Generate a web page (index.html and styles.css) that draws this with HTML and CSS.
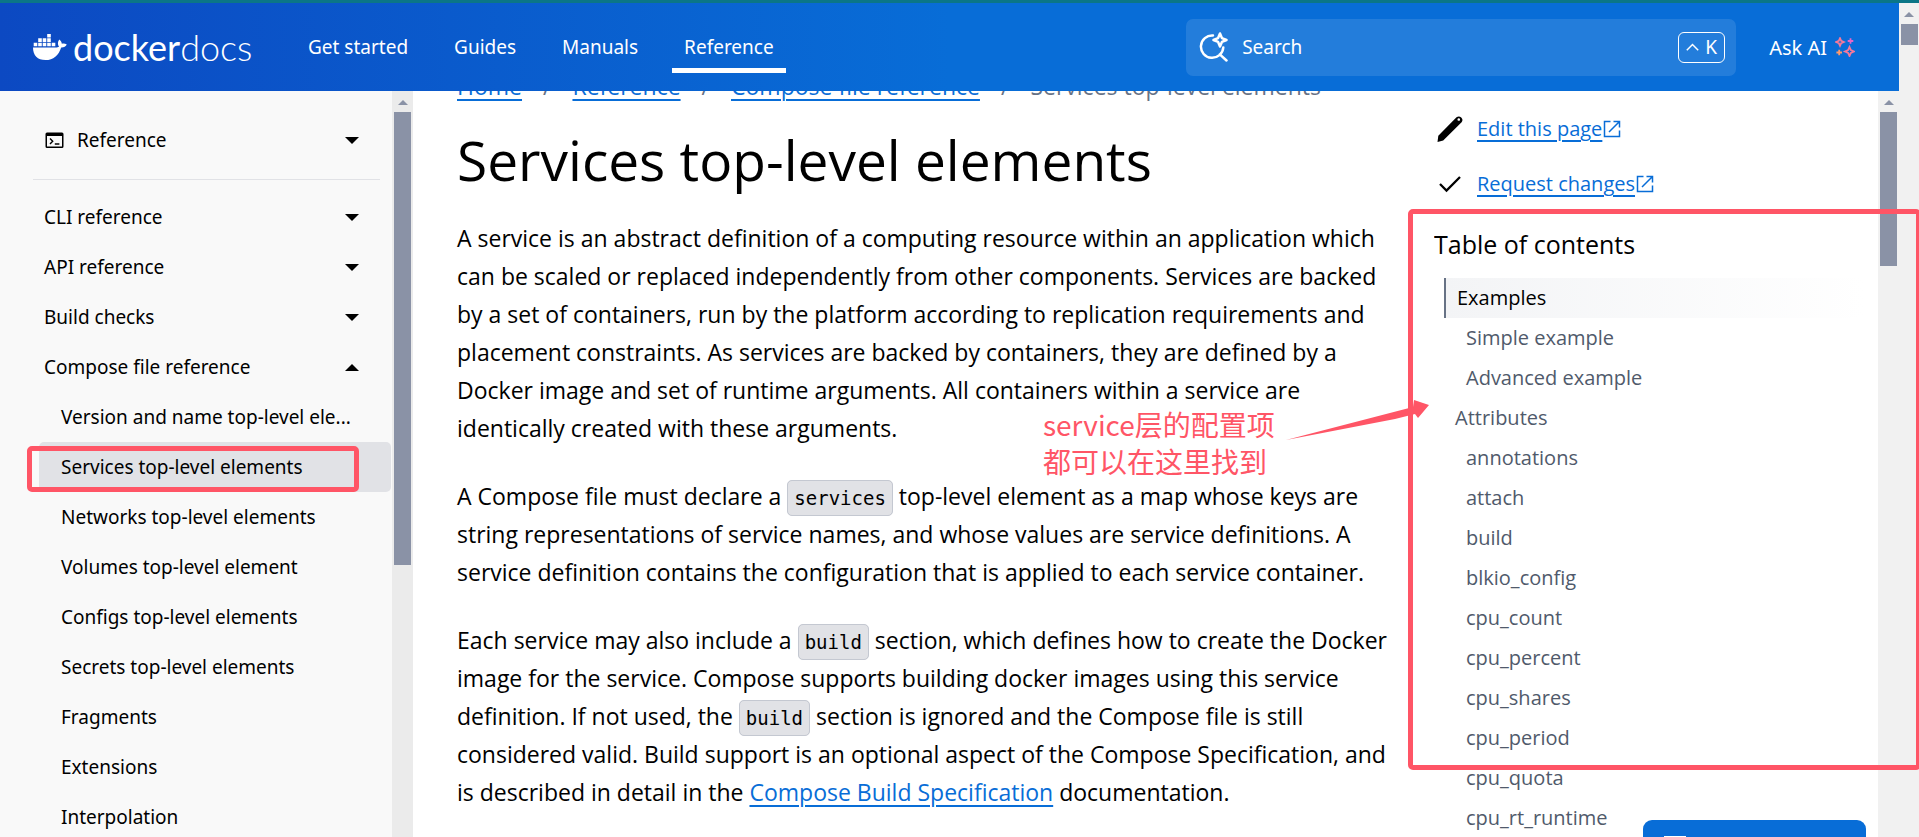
FILE: index.html
```html
<!DOCTYPE html>
<html lang="en">
<head>
<meta charset="utf-8">
<title>Services top-level elements | Docker Docs</title>
<link rel="stylesheet" href="styles.css">
</head>
<body>
<div class="window">
  <div class="site">
    <header class="header">
      <a class="logo" href="#">
        <svg class="logo-whale" width="34" height="28" viewBox="0 0 34 28" fill="#fff" aria-hidden="true">
          <path d="M14.200 1h3.600v3.600h-3.600zM5.200 5.300h3.600v3.600H5.200zM9.700 5.300h3.600v3.600H9.700zM14.200 5.300h3.600v3.600h-3.600zM.7 9.700h3.600v3.600H.7zM5.200 9.700h3.600v3.600H5.200zM9.700 9.700h3.600v3.600H9.700zM14.200 9.700h3.600v3.600h-3.600zM18.700 9.700h3.600v3.600h-3.600z"/>
          <path d="M0 14.500h22.500c1.500 0 2.900-.4 3.500-.8-1.500-2-1.500-5 .3-7.200 1.600 1.200 2.300 2.500 2.500 4.200 1.800-.4 3.400-.2 5 .7-1 2.200-3 3.100-5.600 3C25.500 22.500 20.500 27 12.500 27 4.500 27 0 22.500 0 14.500z"/>
        </svg>
        <span class="logo-text">docker<span class="logo-light">docs</span></span>
      </a>
      <nav class="nav">
        <a href="#">Get started</a>
        <a href="#">Guides</a>
        <a href="#">Manuals</a>
        <a class="current" href="#">Reference</a>
      </nav>
      <button class="search" type="button">
        <svg width="30" height="30" viewBox="0 0 30 30" fill="none" stroke="#fff" stroke-width="2.500" stroke-linecap="round" stroke-linejoin="round" aria-hidden="true">
          <path d="M14 3.500A11.200 11.200 0 1 0 24.300 15.500M20.800 22.300l6.700 6.200"/>
          <path d="M21 1.500l1.900 4.600 4.600 1.900-4.600 1.900L21 14.500l-1.900-4.600L14.500 8l4.600-1.900z"/>
        </svg>
        <span class="search-label">Search</span>
        <kbd class="keys">
          <svg width="13" height="8" viewBox="0 0 13 8" fill="none" stroke="#fff" stroke-width="1.500" aria-hidden="true"><path d="M.8 7.200l5.700-5.700 5.700 5.700"/></svg>
          K
        </kbd>
      </button>
      <button class="ask" type="button">Ask AI
        <svg width="20" height="20" viewBox="0 0 20 20" fill="none" stroke-width="1.800" aria-hidden="true">
          <path stroke="#f5799a" d="M5 1.200l1.200 2.600L8.800 5 6.200 6.200 5 8.800 3.800 6.200 1.200 5l2.600-1.200zM14.500 10l1.400 3.100L19 14.500l-3.100 1.400L14.500 19l-1.400-3.100L10 14.500l3.100-1.400z"/>
          <path stroke="#e566c8" d="M15.500 1.200v5.600M12.700 4h5.600"/>
          <path stroke="#ff9a6b" d="M4.200 12.700v5.600M1.400 15.500H7"/>
        </svg>
      </button>
    </header>

    <div class="columns">
      <aside class="sidebar">
        <div class="sidebar-body">
          <button class="section" type="button">
            <svg width="19" height="17" viewBox="0 0 19 17" aria-hidden="true"><path d="M2 .5h15A1.500 1.500 0 0 1 18.500 2v12.500a1.500 1.500 0 0 1-1.500 1.500H2A1.500 1.500 0 0 1 .5 14.500V2A1.500 1.500 0 0 1 2 .5zM2 4v10.500h15V4z" fill-rule="evenodd"/><path d="M5 6.500l2.700 2.700L5 12M9.800 12h4.600" fill="none" stroke="#000" stroke-width="1.400"/></svg>
            <span class="grow">Reference</span>
            <span class="caret"></span>
          </button>
          <nav class="tree">
            <button type="button">CLI reference<span class="caret"></span></button>
            <button type="button">API reference<span class="caret"></span></button>
            <button type="button">Build checks<span class="caret"></span></button>
            <button type="button">Compose file reference<span class="caret caret-up"></span></button>
            <a href="#"><span>Version and name top-level ele...</span></a>
            <a class="selected" href="#"><span>Services top-level elements</span></a>
            <a href="#"><span>Networks top-level elements</span></a>
            <a href="#"><span>Volumes top-level element</span></a>
            <a href="#"><span>Configs top-level elements</span></a>
            <a href="#"><span>Secrets top-level elements</span></a>
            <a href="#"><span>Fragments</span></a>
            <a href="#"><span>Extensions</span></a>
            <a href="#"><span>Interpolation</span></a>
          </nav>
        </div>
        <div class="scrollbar scrollbar-side"><span class="arrow"></span><span class="thumb"></span></div>
      </aside>

      <main class="article">
        <nav class="crumbs"><a href="#">Home</a><span>/</span><a href="#">Reference</a><span>/</span><a href="#">Compose file reference</a><span>/</span><span>Services top-level elements</span></nav>
        <h1>Services top-level elements</h1>
        <p>A service is an abstract definition of a computing resource within an application which<br>can be scaled or replaced independently from other components. Services are backed<br>by a set of containers, run by the platform according to replication requirements and<br>placement constraints. As services are backed by containers, they are defined by a<br>Docker image and set of runtime arguments. All containers within a service are<br>identically created with these arguments.</p>
        <p>A Compose file must declare a <code>services</code> top-level element as a map whose keys are<br>string representations of service names, and whose values are service definitions. A<br>service definition contains the configuration that is applied to each service container.</p>
        <p>Each service may also include a <code>build</code> section, which defines how to create the Docker<br>image for the service. Compose supports building docker images using this service<br>definition. If not used, the <code>build</code> section is ignored and the Compose file is still<br>considered valid. Build support is an optional aspect of the Compose Specification, and<br>is described in detail in the <a href="#">Compose Build Specification</a> documentation.</p>
      </main>

      <aside class="toc">
        <div class="toc-body">
          <div class="action">
            <svg width="28" height="28" viewBox="0 0 28 28" aria-hidden="true"><path d="M20.500 2.300a3.600 3.600 0 0 1 5.100 5L7.200 25.600 1.500 27l.8-6.200zm2.200.9a1.300 1.300 0 1 0 1.300 1.700 1.300 1.300 0 0 0-1.300-1.700z" fill-rule="evenodd"/></svg>
            <a href="#">Edit this page</a>
            <svg class="ext" width="18" height="18" viewBox="0 0 18 18" aria-hidden="true"><path d="M7.500 1.500h-6v15h15v-6M10.500 1.500h6v6M16 2L6 12"/></svg>
          </div>
          <div class="action">
            <svg width="28" height="28" viewBox="0 0 28 28" fill="none" stroke="#000" stroke-width="2.300" aria-hidden="true"><path d="M4 14l6.500 6.500L24 7"/></svg>
            <a href="#">Request changes</a>
            <svg class="ext" width="18" height="18" viewBox="0 0 18 18" aria-hidden="true"><path d="M7.500 1.500h-6v15h15v-6M10.500 1.500h6v6M16 2L6 12"/></svg>
          </div>
          <h2>Table of contents</h2>
          <nav class="toc-list">
            <a class="active" href="#">Examples</a>
            <a class="sub" href="#">Simple example</a>
            <a class="sub" href="#">Advanced example</a>
            <a href="#">Attributes</a>
            <a class="sub" href="#">annotations</a>
            <a class="sub" href="#">attach</a>
            <a class="sub" href="#">build</a>
            <a class="sub" href="#">blkio_config</a>
            <a class="sub" href="#">cpu_count</a>
            <a class="sub" href="#">cpu_percent</a>
            <a class="sub" href="#">cpu_shares</a>
            <a class="sub" href="#">cpu_period</a>
            <a class="sub" href="#">cpu_quota</a>
            <a class="sub" href="#">cpu_rt_runtime</a>
          </nav>
        </div>
        <div class="scrollbar scrollbar-toc"><span class="arrow"></span><span class="thumb"></span></div>
      </aside>
    </div>
  </div>
  <div class="scrollbar scrollbar-page"><span class="arrow"></span><span class="thumb"></span></div>

  <button class="feedback" type="button" aria-label="Feedback">
    <svg width="22" height="20" viewBox="0 0 22 20" fill="none" stroke="#fff" stroke-width="2" aria-hidden="true"><path d="M1 1h20v14H6l-5 4z"/></svg>
  </button>

  <div class="mark mark-item"></div>
  <div class="mark mark-toc"></div>
  <div class="note">service层的配置项<br>都可以在这里找到</div>
  <svg class="pointer" width="144" height="42" viewBox="0 0 144 42" fill="#ff5566" aria-hidden="true"><path d="M0 41L127 8l1-7 15 5-11 13-3-4-20 5z"/></svg>
</div>
</body>
</html>
```
FILE: styles.css
```css
* { box-sizing: border-box; }

body {
  margin: 0;
  background: #fff;
  color: #000;
  font-family: "Noto Sans", "Noto Sans CJK SC", sans-serif;
  font-size: 19px;
}

button { border: 0; padding: 0; background: none; color: inherit; font: inherit; text-align: left; cursor: pointer; }
a { color: #086dd7; }
svg { flex: none; }

.window {
  position: relative;
  display: flex;
  height: 100vh;
  overflow: hidden;
  border-top: 3px solid #0b7687;
}
.site { flex: 1; min-width: 0; display: flex; flex-direction: column; }

/* Header */
.header {
  display: flex;
  align-items: center;
  flex: none;
  height: 88px;
  padding-left: 33px;
  padding-right: 44px;
  background: linear-gradient(90deg, #0c49c2, #086dd7 50%);
  color: #fff;
}
.logo { display: flex; align-items: center; gap: 6px; width: 263px; color: #fff; text-decoration: none; }
.logo-text { font: 400 36px/40px Lato, sans-serif; }
.logo-light { font-weight: 300; }
.nav { display: flex; gap: 22px; flex: 1; }
.nav a {
  height: 52px;
  padding: 0 12px;
  border-bottom: 5px solid transparent;
  border-top: 5px solid transparent;
  color: #fff;
  line-height: 42px;
  text-decoration: none;
}
.nav .current { border-bottom-color: #fff; }
.search {
  display: flex;
  align-items: center;
  width: 550px;
  height: 57px;
  padding: 0 11px 0 13px;
  border-radius: 7px;
  background: rgba(255, 255, 255, 0.11);
}
.search-label { flex: 1; padding-left: 13px; }
.keys {
  display: flex;
  align-items: center;
  justify-content: center;
  gap: 6px;
  width: 47px;
  height: 31px;
  border: 1px solid #fff;
  border-radius: 6px;
  font: inherit;
}
.ask { display: flex; align-items: center; gap: 8px; margin-left: 33px; font-size: 20px; }

/* Columns */
.columns { flex: 1; min-height: 0; display: flex; overflow: hidden; }

.scrollbar {
  display: flex;
  flex-direction: column;
  align-items: center;
  flex: none;
  width: 21px;
  background: #f1f1f1;
}
.arrow {
  margin: 9px 0 7px;
  border: 5px solid transparent;
  border-top: 0;
  border-bottom-color: #8a92a6;
}
.thumb { width: 17px; background: #8a92a6; }
.scrollbar-side { background: #ebebeb; }
.scrollbar-side .thumb { height: 453px; }
.scrollbar-toc .thumb { height: 154px; }
.scrollbar-page { width: 20px; }
.scrollbar-page .thumb { height: 21px; }

/* Sidebar */
.sidebar { display: flex; flex: none; width: 413px; background: #f9f9f9; }
.sidebar-body { flex: 1; min-width: 0; overflow: hidden; padding-top: 10px; }
.section {
  display: flex;
  align-items: center;
  gap: 13px;
  width: 347px;
  height: 79px;
  margin: 0 0 12px 33px;
  padding: 0 21px 0 12px;
  border-bottom: 1px solid #e1e2e6;
}
.grow { flex: 1; }
.caret { border: 7px solid transparent; border-top-color: #000; border-bottom: 0; }
.caret-up { border-top: 0; border-bottom: 7px solid #000; }
.tree { display: flex; flex-direction: column; padding: 0 1px 0 39px; }
.tree button, .tree a {
  display: flex;
  align-items: center;
  justify-content: space-between;
  height: 50px;
  padding: 0 32px 0 5px;
  border-radius: 5px;
  color: #000;
  text-decoration: none;
}
.tree a { padding: 0 0 0 22px; }
.tree a span { white-space: nowrap; }
.tree .selected { background: #e1e2e6; }

/* Article */
.article {
  flex: 1;
  min-width: 0;
  padding: 0 40px 0 44px;
  font-family: "Open Sans", sans-serif;
  font-size: 23px;
  line-height: 38px;
  white-space: nowrap;
}
.crumbs { display: flex; gap: 21px; margin: -24px 0 23px; color: #677285; }
.crumbs a, .article p a { text-decoration-thickness: 2px; text-underline-offset: 4px; }
.article h1 { margin: 0 0 27px; font-size: 55px; font-weight: 400; line-height: 64px; }
.article p { margin: 0 0 30px; }
.article code {
  padding: 6px;
  border: 1px solid #c4c8d1;
  border-radius: 5px;
  background: #e1e2e6;
  font: 19px "DejaVu Sans Mono", monospace;
}

/* Table of contents */
.toc { display: flex; flex: none; width: 465px; font-family: "Open Sans", sans-serif; }
.toc-body { flex: 1; padding-top: 10px; font-size: 20px; overflow: hidden; }
.action { display: flex; align-items: center; height: 55px; padding-left: 2px; }
.action a { margin-left: 13px; text-underline-offset: 4px; }
.ext { margin-left: 1px; fill: none; stroke: #086dd7; stroke-width: 1.500; }
.toc h2 { margin: 13px 0 14px; font-size: 25px; font-weight: 400; line-height: 40px; }
.toc-list { display: flex; flex-direction: column; padding: 0 14px 0 10px; }
.toc-list a { padding-left: 11px; color: #505a6b; line-height: 40px; text-decoration: none; }
.toc-list .sub { padding-left: 22px; }
.toc-list .active {
  border-left: 2px solid #677285;
  background: linear-gradient(90deg, #f3f4f6, #fff);
  color: #000;
}

/* Floating button */
.feedback {
  position: absolute;
  right: 53px;
  bottom: -40px;
  width: 223px;
  height: 57px;
  padding: 16px 21px;
  border-radius: 9px;
  background: #086dd7;
}

/* Annotations over the page */
.mark { position: absolute; border: 5px solid #ff5566; border-radius: 5px; }
.mark-item { left: 27px; top: 443px; width: 332px; height: 46px; }
.mark-toc { left: 1408px; right: -2px; top: 206px; height: 561px; }
.note {
  position: absolute;
  left: 1043px;
  top: 403px;
  color: #ff5566;
  font: 28px/37px "Noto Sans CJK SC", sans-serif;
}
.pointer { position: absolute; left: 1286px; top: 396px; }
```
